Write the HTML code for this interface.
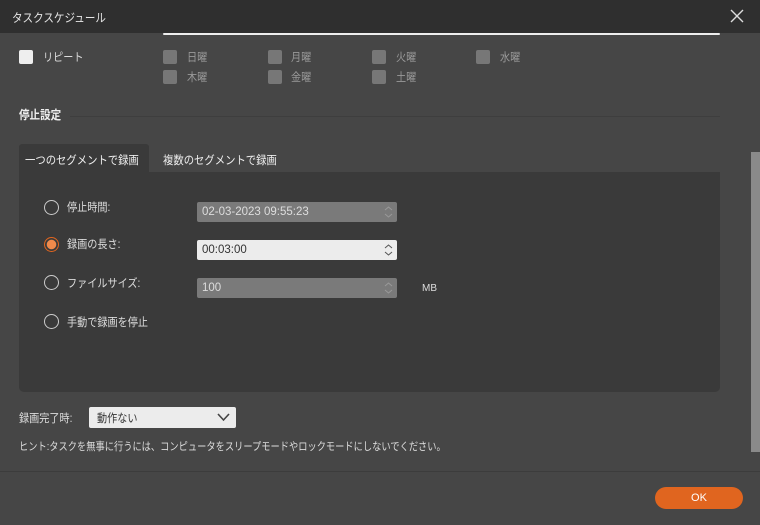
<!DOCTYPE html>
<html><head><meta charset="utf-8"><style>
*{margin:0;padding:0;box-sizing:border-box}
body{width:760px;height:525px;background:#464646;font-family:"Liberation Sans","Noto Sans CJK JP",sans-serif;font-size:11.5px;color:#ddd;position:relative;overflow:hidden}
.a{position:absolute;white-space:nowrap}
.c{transform:scaleX(.88);transform-origin:left center}
.cb{position:absolute;width:14px;height:14px;border-radius:2px;background:#777}
.rad{position:absolute;width:15px;height:15px;border-radius:50%;border:1.5px solid #ccc}
.inp{position:absolute;height:20px;border-radius:2px;background:#7a7a7a;color:#ddd;padding-left:5px;line-height:20px;font-size:11.5px}
.sp{position:absolute;right:4px;top:3px}
</style></head><body>
<div class="a" style="left:0;top:0;width:760px;height:33px;background:#2f2f2f"></div>
<div class="a c" style="left:12px;top:9px;font-size:12px;color:#e6e6e6">タスクスケジュール</div>
<svg class="a" style="left:730px;top:9px" width="14" height="14"><path d="M1 1L13 13M13 1L1 13" stroke="#ddd" stroke-width="1.4"/></svg>
<div class="a" style="left:163px;top:33px;width:557px;height:2px;background:#eee;border-radius:1px"></div>

<div class="cb" style="left:19px;top:50px;background:#eee"></div>
<div class="a c" style="left:43px;top:49px;color:#ddd">リピート</div>
<div class="cb" style="left:163px;top:50px"></div><div class="a c" style="left:187px;top:49px;color:#999">日曜</div>
<div class="cb" style="left:268px;top:50px"></div><div class="a c" style="left:291px;top:49px;color:#999">月曜</div>
<div class="cb" style="left:372px;top:50px"></div><div class="a c" style="left:396px;top:49px;color:#999">火曜</div>
<div class="cb" style="left:476px;top:50px"></div><div class="a c" style="left:500px;top:49px;color:#999">水曜</div>
<div class="cb" style="left:163px;top:70px"></div><div class="a c" style="left:187px;top:69px;color:#999">木曜</div>
<div class="cb" style="left:268px;top:70px"></div><div class="a c" style="left:291px;top:69px;color:#999">金曜</div>
<div class="cb" style="left:372px;top:70px"></div><div class="a c" style="left:396px;top:69px;color:#999">土曜</div>

<div class="a c" style="left:19px;top:106px;font-size:12px;font-weight:bold;color:#eee">停止設定</div>
<div class="a" style="left:70px;top:116px;width:650px;height:1px;background:#3e3e3e"></div>

<div class="a" style="left:19px;top:144px;width:130px;height:30px;background:#3a3a3a;border-radius:3px 3px 0 0"></div>
<div class="a" style="left:25px;top:152px;color:#eee;transform:scaleX(.9);transform-origin:left">一つのセグメントで録画</div>
<div class="a" style="left:163px;top:152px;color:#eee;transform:scaleX(.9);transform-origin:left">複数のセグメントで録画</div>
<div class="a" style="left:19px;top:172px;width:701px;height:220px;background:#3a3a3a;border-radius:0 0 5px 5px"></div>

<div class="rad" style="left:44px;top:200px"></div><div class="a c" style="left:67px;top:199px">停止時間:</div>
<div class="inp" style="left:197px;top:202px;width:200px">02-03-2023 09:55:23<svg class="sp" width="9" height="14"><path d="M1 5L4.5 2L8 5M1 9L4.5 12L8 9" stroke="#999" fill="none"/></svg></div>
<div class="rad" style="left:44px;top:237px;border-color:#e0651f;background:radial-gradient(circle,#f08a4b 0 4.5px,transparent 5px)"></div><div class="a c" style="left:67px;top:236px">録画の長さ:</div>
<div class="inp" style="left:197px;top:240px;width:200px;background:#ececec;color:#333">00:03:00<svg class="sp" width="9" height="14"><path d="M1 5L4.5 2L8 5M1 9L4.5 12L8 9" stroke="#555" fill="none"/></svg></div>
<div class="rad" style="left:44px;top:275px"></div><div class="a c" style="left:67px;top:275px">ファイルサイズ:</div>
<div class="inp" style="left:197px;top:278px;width:200px">100<svg class="sp" width="9" height="14"><path d="M1 5L4.5 2L8 5M1 9L4.5 12L8 9" stroke="#999" fill="none"/></svg></div>
<div class="a" style="left:422px;top:283px;font-size:10px">MB</div>
<div class="rad" style="left:44px;top:314px"></div><div class="a c" style="left:67px;top:314px">手動で録画を停止</div>

<div class="a c" style="left:19px;top:410px">録画完了時:</div>
<div class="a" style="left:89px;top:407px;width:147px;height:21px;background:#ececec;border-radius:2px;color:#333;padding:3px 0 0 8px"><span style="display:inline-block;transform:scaleX(.88);transform-origin:left">動作ない</span></div>
<svg class="a" style="left:217px;top:413px" width="13" height="9"><path d="M1 1L6.5 7L12 1" stroke="#444" stroke-width="1.6" fill="none"/></svg>
<div class="a" style="left:19px;top:438px;font-size:11px;transform:scaleX(.84);transform-origin:left">ヒント:タスクを無事に行うには、コンピュータをスリープモードやロックモードにしないでください。</div>

<div class="a" style="left:751px;top:152px;width:9px;height:300px;background:#8a8a8a"></div>
<div class="a" style="left:0;top:471px;width:760px;height:1px;background:#3c3c3c"></div>
<div class="a" style="left:655px;top:487px;width:88px;height:22px;background:#e0651f;border-radius:11px;color:#fff;text-align:center;line-height:22px;font-size:11px">OK</div>
</body></html>
